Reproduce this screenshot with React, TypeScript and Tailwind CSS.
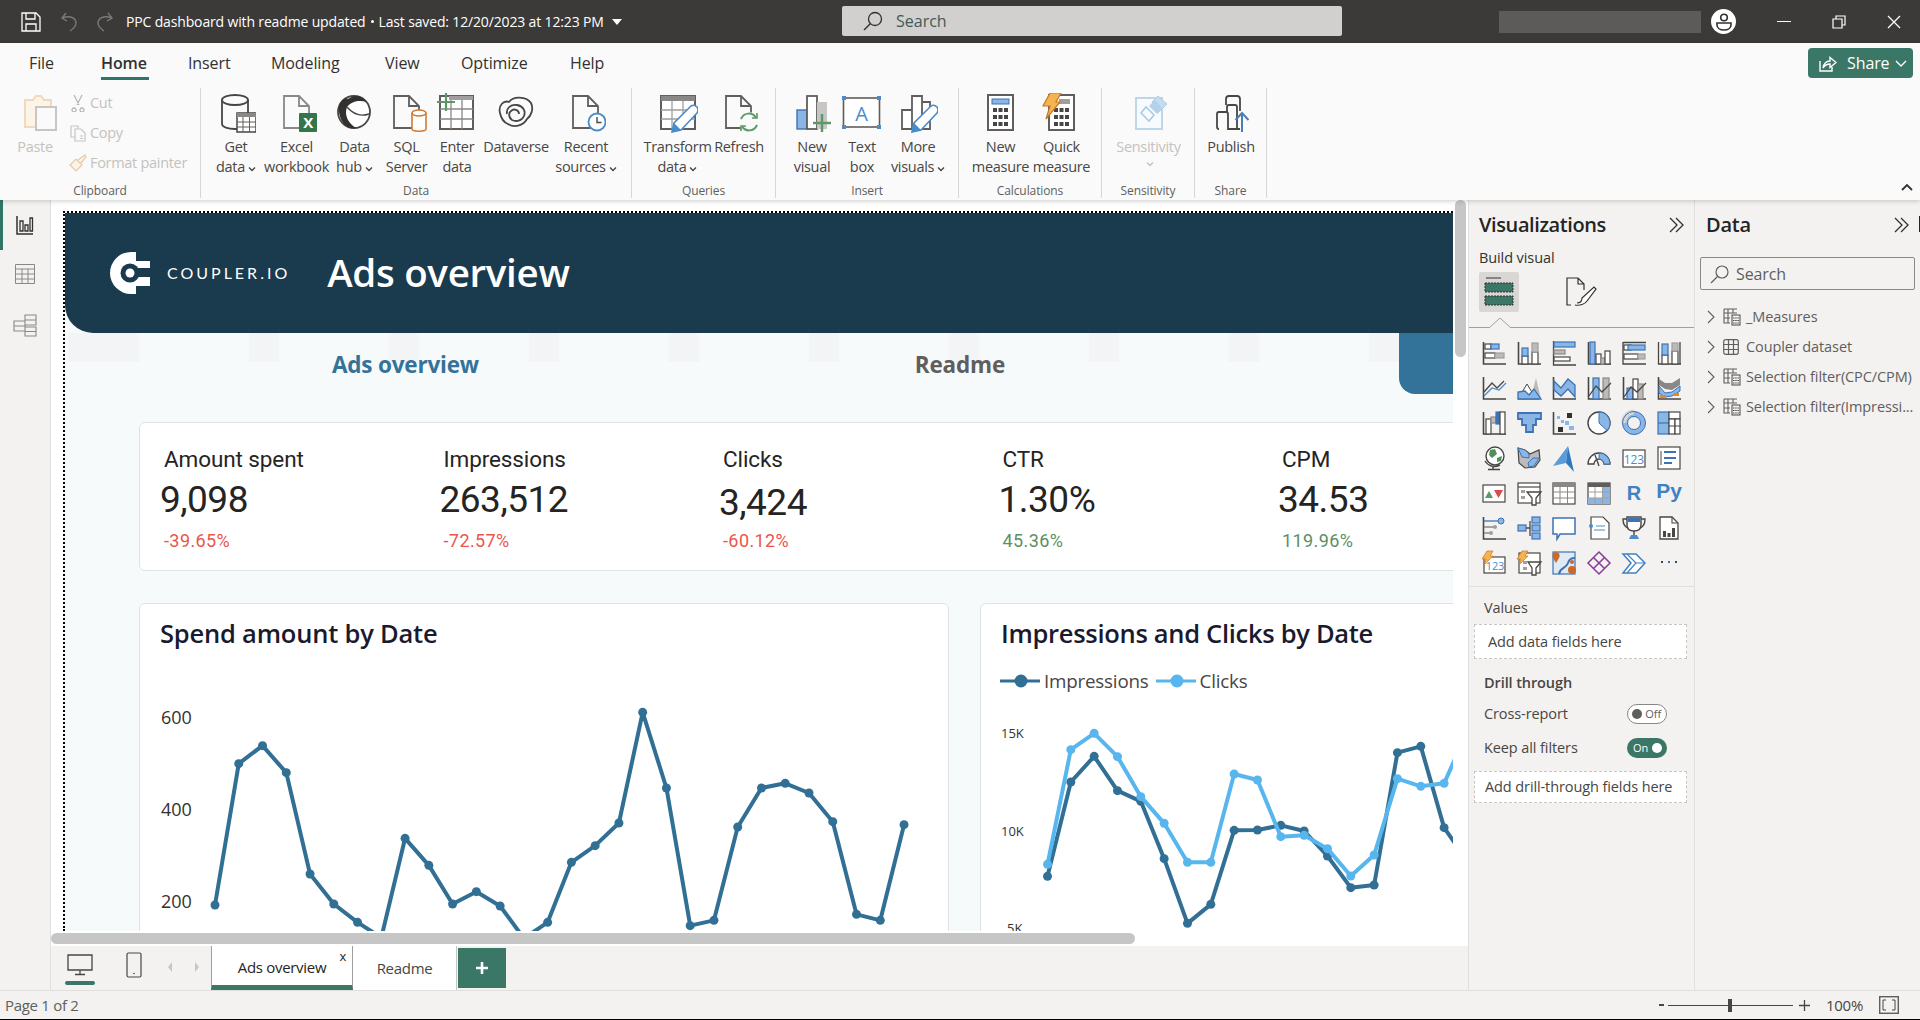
import type { ReactNode } from "react"

// ─── Colours ───────────────────────────────────────────────────────────────

const D = "#484644"
const B = "#8ab6e6"
const BS = "#3d72b4"
const G = "#bdbbb9"
const W = "#ffffff"

// ─── Small drawing helpers ─────────────────────────────────────────────────

function R({ x, y, w, h, f = W, s = D }: { x: number; y: number; w: number; h: number; f?: string; s?: string }) {
  return <rect x={x} y={y} width={w} height={h} fill={f} stroke={s} strokeWidth="1.2" />
}

function Axes() {
  return <path d="M1.5 1V23H24" fill="none" stroke={D} strokeWidth="1.6" />
}

function Doc({ c = "#605e5c" }: { c?: string }) {
  return <path d="M7 3H22L32 13V35H7ZM22 3V13H32" fill="#fafafa" stroke={c} strokeWidth="1.8" />
}

function Pencil() {
  return (
    <g>
      <path d="M14 39L16 30L33 13Q36 11 39 14Q41 17 39 20L23 37Z" fill="#fff" stroke="#4a8ccb" strokeWidth="1.6" />
      <path d="M14 39L16 30L23 37Z" fill="#4a8ccb" />
    </g>
  )
}

function Calc() {
  return (
    <>
      <rect x="7" y="2" width="25" height="35" fill="#fff" stroke="#605e5c" strokeWidth="2" />
      {[12, 17.5, 23].map((x) =>
        [15, 22, 29].map((y) => <rect key={`${x}-${y}`} x={x} y={y} width="4" height="4" fill="#484644" />),
      )}
    </>
  )
}

function Rib({ children }: { children: ReactNode }) {
  return (
    <svg viewBox="0 0 40 40" className="w-[40px] h-[40px] shrink-0">
      {children}
    </svg>
  )
}

// ─── Ribbon icons ──────────────────────────────────────────────────────────

const GetDataIcon = (
  <Rib>
    <path d="M6 7V31C6 34 12 36 19 36C26 36 32 34 32 31V7" fill="#fafafa" stroke="#484644" strokeWidth="1.8" />
    <ellipse cx="19" cy="7" rx="13" ry="5" fill="#fafafa" stroke="#484644" strokeWidth="1.8" />
    <rect x="21" y="20" width="19" height="19" fill="#fff" stroke="#484644" strokeWidth="1.5" />
    <rect x="21" y="20" width="19" height="4" fill="#8a8886" />
    <path d="M27 24V39M33.5 24V39M21 29H40M21 34H40" stroke="#605e5c" strokeWidth="1" />
  </Rib>
)
const ExcelIcon = (
  <Rib>
    <Doc c="#8a8886" />
    <rect x="22" y="20" width="18" height="19" rx="1" fill="#33764b" />
    <text x="31" y="35" textAnchor="middle" fontSize="15" fontWeight="700" fill="#fff">X</text>
  </Rib>
)
const HubIcon = (
  <Rib>
    <circle cx="19" cy="19" r="16" fill="#fff" stroke="#484644" strokeWidth="1.8" />
    <path d="M4 19C3 10 8 4 13 6C20 1 27 2 32 9C24 7 17 8 12 14C9 22 13 30 21 35C12 37 5 29 4 19Z" fill="#323130" />
    <path d="M12 14C18 21 25 24 34 21" fill="none" stroke="#484644" strokeWidth="1.4" />
  </Rib>
)
const SqlIcon = (
  <Rib>
    <Doc c="#605e5c" />
    <path d="M25 20V36C25 39 39 39 39 36V20" fill="#fff" stroke="#d07a33" strokeWidth="1.6" />
    <ellipse cx="32" cy="20" rx="7" ry="3" fill="#fff" stroke="#d07a33" strokeWidth="1.6" />
  </Rib>
)
const EnterIcon = (
  <Rib>
    <rect x="3" y="3" width="33" height="33" fill="#fff" stroke="#605e5c" strokeWidth="2" />
    <rect x="12" y="3" width="24" height="4" fill="#a19f9d" />
    <path d="M14 7V36M25 7V36M3 16H36M3 26H36" stroke="#8a8886" strokeWidth="1.3" />
    <path d="M9 0V18M0 9H18" stroke="#5b9a68" strokeWidth="2.2" />
  </Rib>
)
const DataverseIcon = (
  <Rib>
    <path d="M4 20C2 12 8 7 13 9C17 3 30 3 35 10C38 16 35 23 31 26C27 33 18 35 12 31C7 29 5 25 4 20Z" fill="none" stroke="#484644" strokeWidth="1.8" />
    <path d="M11 21C10 15 15 11 21 12C27 13 30 18 28 23C26 28 20 29 16 27C13 25 12 20 15 18C18 15 23 17 23 21" fill="none" stroke="#484644" strokeWidth="1.8" />
  </Rib>
)
const RecentIcon = (
  <Rib>
    <Doc />
    <circle cx="31" cy="29" r="8.5" fill="#fff" stroke="#4a8ccb" strokeWidth="1.8" />
    <path d="M31 24V29.5H35.5" fill="none" stroke="#484644" strokeWidth="1.4" />
  </Rib>
)
const TransformIcon = (
  <Rib>
    <rect x="3" y="3" width="34" height="33" fill="#fff" stroke="#605e5c" strokeWidth="2" />
    <rect x="3" y="3" width="34" height="5" fill="#8a8886" />
    <path d="M14 8V36M25 8V36M3 17H37M3 26H37" stroke="#a19f9d" strokeWidth="1.3" />
    <Pencil />
  </Rib>
)
const RefreshIcon = (
  <Rib>
    <Doc />
    <circle cx="30" cy="29" r="10" fill="#fafafa" />
    <path d="M22 26C25 19 34 19 37 25M38 32C35 39 26 39 23 33" fill="none" stroke="#5b9a68" strokeWidth="2" />
    <path d="M33 25H38V20M27 33H22V38" fill="none" stroke="#5b9a68" strokeWidth="1.6" />
  </Rib>
)
const NewVisualIcon = (
  <Rib>
    <rect x="5" y="17" width="10" height="19" fill={B} stroke={BS} strokeWidth="1.4" />
    <rect x="15" y="3" width="10" height="33" fill="#fff" stroke="#605e5c" strokeWidth="1.8" />
    <rect x="25" y="9" width="10" height="27" fill="#c8c6c4" />
    <path d="M30 21V39M21 30H39" stroke="#5b9a68" strokeWidth="2.4" />
  </Rib>
)
const TextBoxIcon = (
  <Rib>
    <rect x="1.5" y="5" width="36" height="29" fill="#fff" stroke="#605e5c" strokeWidth="1.6" />
    {[[0, 3], [35, 3], [0, 32], [35, 32]].map(([x, y]) => (
      <rect key={`${x}-${y}`} x={x} y={y} width="4" height="4" fill="#4a8ccb" />
    ))}
    <text x="19.5" y="28" textAnchor="middle" fontSize="20" fill="#4a8ccb">A</text>
  </Rib>
)
const MoreVisualsIcon = (
  <Rib>
    <path d="M4 17H14V36H4ZM14 3H24V36H14ZM24 9H32V36H24Z" fill="#fff" stroke="#605e5c" strokeWidth="1.8" />
    <Pencil />
  </Rib>
)
const NewMeasureIcon = (
  <Rib>
    <Calc />
    <rect x="11" y="6" width="17" height="5" fill={B} stroke={BS} strokeWidth="1" />
  </Rib>
)
const QuickMeasureIcon = (
  <Rib>
    <Calc />
    <rect x="17" y="6" width="11" height="5" fill="#a19f9d" />
    <path d="M8 0H19L14 9H18L4 26L8 13H1Z" fill="#f6b352" stroke="#c7782a" strokeWidth="1.2" />
  </Rib>
)
const SensitivityIcon = (
  <Rib>
    <rect x="7" y="5" width="26" height="31" fill="#f8fbfd" stroke="#bcd6ea" strokeWidth="2" />
    <path d="M12 20L20 28L25 22L17 14Z" fill="none" stroke="#a9cbe4" strokeWidth="1.6" />
    <path d="M23 9L29 3L38 11L32 17Z" fill="#c4dcee" stroke="#a9cbe4" strokeWidth="1" />
    <path d="M20 13L26 7L34 16L28 21Z" fill="#b3d2e9" />
  </Rib>
)
const PublishIcon = (
  <Rib>
    <path d="M15 12V6Q15 3 18 3H26Q29 3 29 6V18" fill="none" stroke="#484644" strokeWidth="1.8" />
    <path d="M16 19V14Q16 12 18 12H24Q26 12 26 14V36" fill="none" stroke="#484644" strokeWidth="1.8" />
    <path d="M8 36Q6 36 6 34V21Q6 19 8 19H15Q17 19 17 21V36H29" fill="none" stroke="#484644" strokeWidth="1.8" />
    <path d="M31 20V39M24.5 27L31 20L37.5 27" fill="none" stroke="#4a7fb5" strokeWidth="2" />
  </Rib>
)

// ─── Ribbon ────────────────────────────────────────────────────────────────

type RibbonBtn = { w: string; l1: string; l2?: string; caret?: boolean; icon: ReactNode; muted?: boolean }

function RibbonButton({ b }: { b: RibbonBtn }) {
  return (
    <div className={`${b.w} shrink-0 flex flex-col items-center whitespace-nowrap leading-[20px] ${b.muted ? "text-[#c4c2c0]" : "text-[#484644]"}`}>
      {b.icon}
      <span className="mt-[4px]">{b.l1}</span>
      {b.l2 && (
        <span className="flex items-center">
          {b.l2}
          {b.caret && <Caret />}
        </span>
      )}
      {!b.l2 && b.caret && <Caret />}
    </div>
  )
}

function Caret() {
  return (
    <svg viewBox="0 0 8 8" className="w-[8px] h-[8px] ml-[3px] mt-[3px]">
      <path d="M1 2.5L4 5.5L7 2.5" fill="none" stroke="currentColor" strokeWidth="1.4" />
    </svg>
  )
}

function Group({ label, w, pad, children }: { label: string; w: string; pad: string; children: ReactNode }) {
  return (
    <div className={`${w} h-full shrink-0 flex flex-col border-r border-[#d8d6d4]`}>
      <div className={`${pad} flex-1 flex pt-[5px]`}>{children}</div>
      <div className="h-[14px] text-center text-[12px] leading-[14px] text-[#605e5c] tracking-[-0.1px]">{label}</div>
    </div>
  )
}

function ClipIcon({ d }: { d: ReactNode }) {
  return (
    <svg viewBox="0 0 18 18" className="w-[18px] h-[18px] mr-[3px]">
      {d}
    </svg>
  )
}

function Ribbon() {
  return (
    <div className="relative z-10 h-[157px] bg-[#fafafa] shadow-[0_1px_5px_rgba(0,0,0,0.2)] shrink-0">
      <div className="h-[40px] flex items-center pl-[29px] text-[16px] text-[#323130] tracking-[-0.1px]">
        <span className="w-[72px]">File</span>
        <span className="w-[87px] relative font-semibold">
          Home
          <span className="absolute left-0 top-[26px] w-[48px] h-[3px] bg-[#2f7566]" />
        </span>
        <span className="w-[83px]">Insert</span>
        <span className="w-[114px]">Modeling</span>
        <span className="w-[76px]">View</span>
        <span className="w-[109px]">Optimize</span>
        <span>Help</span>
        <div className="ml-auto mr-[7px] w-[105px] h-[30px] rounded-[4px] bg-[#3a7766] text-white flex items-center pl-[9px]">
          <svg viewBox="0 0 20 20" className="w-[20px] h-[20px] mr-[10px]">
            <path d="M3 8V18H15V14" fill="none" stroke="#fff" strokeWidth="1.4" />
            <path d="M6 15C7 10 10 8 13 8V4.5L19 9.5L13 14.5V11C10 11 8 12 6 15Z" fill="none" stroke="#fff" strokeWidth="1.4" />
          </svg>
          Share
          <svg viewBox="0 0 12 12" className="w-[12px] h-[12px] ml-[5px]">
            <path d="M1 4L6 9L11 4" fill="none" stroke="#fff" strokeWidth="1.4" />
          </svg>
        </div>
      </div>
      <div className="h-[110px] mt-[5px] flex text-[14.5px] tracking-[-0.3px]">
        <Group label="Clipboard" w="w-[201px]" pad="pl-[15px]">
          <div className="w-full flex text-[#c4c2c0]">
            <div className="w-[54px] flex flex-col items-center leading-[20px]">
              <svg viewBox="0 0 40 40" className="w-[40px] h-[40px]">
                <path d="M3 7H11L14 3H19L22 7H29V34H3Z" fill="#fdf4e8" stroke="#f0d9bd" strokeWidth="2" />
                <rect x="14" y="14" width="20" height="23" fill="#fafafa" stroke="#c8c6c4" strokeWidth="2" />
              </svg>
              <span className="mt-[4px] -ml-[14px]">Paste</span>
            </div>
            <div className="flex flex-col -mt-[5px]">
              <div className="h-[30px] flex items-center">
                <ClipIcon d={<path d="M5 1L10 11M13 1L8 11M5 14a2 2 0 1 0 .01 0M13 14a2 2 0 1 0 .01 0" fill="none" stroke="#b9b7b5" strokeWidth="1.3" />} />
                Cut
              </div>
              <div className="h-[30px] flex items-center">
                <ClipIcon d={<path d="M2 2H9V5M6 5H12L16 9V17H6ZM2 2V13H6M11 12H14M11 14.5H14" fill="none" stroke="#c8c6c4" strokeWidth="1.2" />} />
                Copy
              </div>
              <div className="h-[30px] flex items-center">
                <ClipIcon d={<path d="M1 11L7 5L13 11L7 17ZM9 6L16 1L17 3L12 9" fill="#fdf4e8" stroke="#e6c9a8" strokeWidth="1.2" />} />
                Format painter
              </div>
            </div>
          </div>
        </Group>
        <Group label="Data" w="w-[431px]" pad="pl-[5px]">
          {[
            { w: "w-[60px]", l1: "Get", l2: "data", caret: true, icon: GetDataIcon },
            { w: "w-[61px]", l1: "Excel", l2: "workbook", icon: ExcelIcon },
            { w: "w-[55px]", l1: "Data", l2: "hub", caret: true, icon: HubIcon },
            { w: "w-[49px]", l1: "SQL", l2: "Server", icon: SqlIcon },
            { w: "w-[52px]", l1: "Enter", l2: "data", icon: EnterIcon },
            { w: "w-[66px]", l1: "Dataverse", icon: DataverseIcon },
            { w: "w-[74px]", l1: "Recent", l2: "sources", caret: true, icon: RecentIcon },
          ].map((b) => (
            <RibbonButton key={b.l1} b={b} />
          ))}
        </Group>
        <Group label="Queries" w="w-[144px]" pad="pl-[8px]">
          <RibbonButton b={{ w: "w-[75px]", l1: "Transform", l2: "data", caret: true, icon: TransformIcon }} />
          <RibbonButton b={{ w: "w-[48px]", l1: "Refresh", icon: RefreshIcon }} />
        </Group>
        <Group label="Insert" w="w-[183px]" pad="pl-[11px]">
          <RibbonButton b={{ w: "w-[50px]", l1: "New", l2: "visual", icon: NewVisualIcon }} />
          <RibbonButton b={{ w: "w-[50px]", l1: "Text", l2: "box", icon: TextBoxIcon }} />
          <RibbonButton b={{ w: "w-[62px]", l1: "More", l2: "visuals", caret: true, icon: MoreVisualsIcon }} />
        </Group>
        <Group label="Calculations" w="w-[143px]" pad="pl-[11px]">
          <RibbonButton b={{ w: "w-[61px]", l1: "New", l2: "measure", icon: NewMeasureIcon }} />
          <RibbonButton b={{ w: "w-[61px]", l1: "Quick", l2: "measure", icon: QuickMeasureIcon }} />
        </Group>
        <Group label="Sensitivity" w="w-[93px]" pad="pl-[9px]">
          <RibbonButton b={{ w: "w-[75px]", l1: "Sensitivity", caret: true, icon: SensitivityIcon, muted: true }} />
        </Group>
        <Group label="Share" w="w-[72px]" pad="pl-[6px]">
          <RibbonButton b={{ w: "w-[60px]", l1: "Publish", icon: PublishIcon }} />
        </Group>
        <div className="ml-auto self-end mr-[7px] mb-[7px]">
          <svg viewBox="0 0 12 8" className="w-[12px] h-[8px]">
            <path d="M1 7L6 2L11 7" fill="none" stroke="#323130" strokeWidth="1.8" />
          </svg>
        </div>
      </div>
    </div>
  )
}

// ─── Title bar ─────────────────────────────────────────────────────────────

function TitleBar() {
  return (
    <div className="h-[43px] shrink-0 bg-[#3b3a39] flex items-center text-white relative">
      <svg viewBox="0 0 20 20" className="ml-[21px] w-[20px] h-[20px]">
        <path d="M2 1H15L19 5V19H1V1ZM5 1V7H14V1M5 19V12H15V19" fill="none" stroke="#fff" strokeWidth="1.3" />
      </svg>
      <svg viewBox="0 0 18 20" className="ml-[19px] w-[18px] h-[20px]">
        <path d="M6 1L2 6L7 9M2 6C10 3 16 6 16 11C16 15 13 17 10 19" fill="none" stroke="#7a7977" strokeWidth="1.4" />
      </svg>
      <svg viewBox="0 0 18 20" className="ml-[18px] w-[18px] h-[20px]">
        <path d="M12 1L16 6L11 9M16 6C8 3 2 6 2 11C2 15 5 17 8 19" fill="none" stroke="#7a7977" strokeWidth="1.4" />
      </svg>
      <span className="ml-[12px] text-[14px] tracking-[-0.15px] whitespace-nowrap">PPC dashboard with readme updated</span>
      <span className="mx-[5px] w-[3px] h-[3px] bg-white rounded-full" />
      <span className="text-[14px] tracking-[-0.15px] whitespace-nowrap">Last saved: 12/20/2023 at 12:23 PM</span>
      <svg viewBox="0 0 10 6" className="ml-[8px] w-[10px] h-[6px]">
        <path d="M0 0H10L5 6Z" fill="#fff" />
      </svg>
      <div className="absolute left-[842px] top-[6px] w-[500px] h-[30px] rounded-[2px] bg-[#d2d0ce] flex items-center pl-[21px] text-[#3f5a58] text-[16px]">
        <svg viewBox="0 0 20 20" className="w-[20px] h-[20px] mr-[13px]">
          <circle cx="12" cy="8" r="6.5" fill="none" stroke="#323130" strokeWidth="1.3" />
          <path d="M7.5 12.5L1 19" stroke="#323130" strokeWidth="1.5" />
        </svg>
        Search
      </div>
      <div className="ml-auto w-[202px] h-[22px] bg-[#5c5b5a]" />
      <div className="ml-[10px] w-[25px] h-[25px] rounded-full bg-white flex items-center justify-center">
        <svg viewBox="0 0 20 20" className="w-[20px] h-[20px]">
          <circle cx="10" cy="5.5" r="3.3" fill="none" stroke="#323130" strokeWidth="1.6" />
          <path d="M3 11H17V13C17 16 14 18 10 18C6 18 3 16 3 13Z" fill="none" stroke="#323130" strokeWidth="1.6" />
        </svg>
      </div>
      <div className="ml-[41px] w-[14px] h-px bg-white" />
      <svg viewBox="0 0 14 14" className="ml-[41px] w-[14px] h-[14px]">
        <path d="M1 4H10V13H1ZM4 4V1H13V10H10" fill="none" stroke="#fff" strokeWidth="1.2" />
      </svg>
      <svg viewBox="0 0 14 14" className="ml-[41px] mr-[19px] w-[14px] h-[14px]">
        <path d="M1 1L13 13M13 1L1 13" stroke="#fff" strokeWidth="1.3" />
      </svg>
    </div>
  )
}

// ─── Left nav ──────────────────────────────────────────────────────────────

function LeftNav() {
  return (
    <div className="w-[51px] shrink-0 bg-[#f3f2f1] border-r border-[#e1dfdd] flex flex-col items-center">
      <div className="relative w-full h-[50px] flex items-center justify-center">
        <span className="absolute left-0 top-0 w-[3px] h-[50px] bg-[#2f7566]" />
        <svg viewBox="0 0 18 20" className="w-[18px] h-[20px]">
          <path d="M1 1V19H17" fill="none" stroke="#323130" strokeWidth="1.5" />
          <path d="M4 6H7V16H4ZM9 10H12V16H9ZM14 3H16.5V16H14Z" fill="none" stroke="#323130" strokeWidth="1.3" />
        </svg>
      </div>
      <svg viewBox="0 0 20 20" className="w-[20px] h-[20px] mt-[14px]">
        <path d="M.5 .5H19.5V19.5H.5ZM.5 5H19.5M.5 10H19.5M.5 15H19.5M7 5V19.5M13 5V19.5" fill="none" stroke="#8a8886" strokeWidth="1" />
      </svg>
      <svg viewBox="0 0 24 24" className="w-[24px] h-[24px] mt-[29px]">
        <path d="M12 2H23V12H12ZM12 7H23M1 8H12V18H1ZM1 13H12M12 14H23V23H12ZM12 18.5H23" fill="none" stroke="#8a8886" strokeWidth="1.1" />
      </svg>
    </div>
  )
}

// ─── Report canvas ─────────────────────────────────────────────────────────

const spendPts = [942, 518, 464, 545, 849, 939, 994, 1040, 742, 823, 939, 902, 945, 1042, 994, 814, 764, 696, 364, 591, 1004, 988, 708, 591, 577, 606, 692, 970, 988, 701]
const impressionPts = [856, 573, 496, 599, 631, 803, 997, 940, 718, 717, 703, 720, 795, 890, 882, 485, 466, 710, 811]
const clickPts = [820, 476, 427, 497, 617, 697, 814, 814, 549, 567, 737, 733, 773, 855, 792, 563, 586, 577, 420]

function Series({ pts, x0, dx, y0, color }: { pts: number[]; x0: number; dx: number; y0: number; color: string }) {
  const xy = pts.map((p, i) => [x0 + i * dx, y0 + p / 3])
  return (
    <>
      <polyline points={xy.map((p) => p.join(",")).join(" ")} fill="none" stroke={color} strokeWidth="4" strokeLinejoin="round" />
      {xy.map((p, i) => (
        <circle key={i} cx={p[0]} cy={p[1]} r="4.5" fill={color} />
      ))}
    </>
  )
}

const kpis = [
  { label: "Amount spent", value: "9,098", pct: "-39.65%", good: false },
  { label: "Impressions", value: "263,512", pct: "-72.57%", good: false },
  { label: "Clicks", value: "3,424", pct: "-60.12%", good: false },
  { label: "CTR", value: "1.30%", pct: "45.36%", good: true },
  { label: "CPM", value: "34.53", pct: "119.96%", good: true },
]

function Coupler() {
  return (
    <svg viewBox="0 0 42 42" className="w-[42px] h-[42px]">
      <path d="M27 0H22A21 21 0 0 0 22 42H27V34H41V25H27V16H41V9H27Z" fill="#fff" />
      <circle cx="21" cy="21" r="9.5" fill="#1a3a4e" />
      <circle cx="21" cy="21" r="4.5" fill="#fff" />
    </svg>
  )
}

function Page() {
  return (
    <div className="w-[1390px] h-full overflow-hidden border-l-2 border-t-2 border-dotted border-black bg-[#f7fafb]">
      <div className="h-[120px] rounded-bl-[28px] bg-[#1a3a4e] flex items-center pl-[44px] text-white">
        <Coupler />
        <span className="ml-[16px] text-[16px] tracking-[3px] font-['Lato',sans-serif]">COUPLER.IO</span>
        <span className="ml-[37px] text-[38.5px] font-semibold tracking-[-0.3px]">Ads overview</span>
      </div>
      <div className="relative h-[89px] flex text-[22.5px] font-bold tracking-[-0.2px]">
        <div className="absolute left-[3px] top-0 h-[29px] flex gap-[110px]">
          <div className="w-[71px] bg-[#f3f4f5]" />
          {[0, 1, 2, 3, 4, 5, 6, 7, 8].map((i) => (
            <div key={i} className="w-[30px] bg-[#f3f4f5]" />
          ))}
        </div>
        <span className="relative ml-[267px] mt-[15px] h-[30px] text-[#34729a]">Ads overview</span>
        <span className="relative ml-[436px] mt-[15px] h-[30px] text-[#605e5c]">Readme</span>
        <div className="relative ml-auto w-[54px] h-[61px] rounded-bl-[16px] bg-[#337299]" />
      </div>
      <div className="ml-[74px] w-[1500px] h-[149px] rounded-[6px] bg-white border border-[#dfe3e5] flex pt-[20px] pl-[20px] font-['Roboto',sans-serif]">
        {kpis.map((k) => (
          <div key={k.label} className="w-[279.5px] shrink-0 flex flex-col">
            <span className="ml-[4px] h-[32px] leading-[32px] text-[22.5px] tracking-[-0.1px] text-[#252423]">{k.label}</span>
            <span className={`h-[44px] leading-[44px] text-[37px] tracking-[-0.5px] text-[#252423] ${k.label === "Clicks" ? "mt-[6px] -mb-[3px]" : "mt-[3px]"}`}>{k.value}</span>
            <span className={`ml-[4px] mt-[8px] h-[22px] leading-[22px] text-[18px] tracking-[0.4px] ${k.good ? "text-[#5d8f5f]" : "text-[#e8574a]"}`}>{k.pct}</span>
          </div>
        ))}
      </div>
      <div className="ml-[74px] mt-[32px] w-[1700px] flex gap-[31px]">
        <div className="w-[810px] h-[500px] shrink-0 rounded-[6px] bg-white border border-[#dfe3e5]">
          <div className="h-[60px] pl-[20px] pt-[10px] text-[25.5px] font-semibold tracking-[-0.2px] text-[#1a1a2e]">Spend amount by Date</div>
          <svg className="block w-full h-[430px]">
            <text x="21" y="60" fontSize="18" fill="#323130">600</text>
            <text x="21" y="152" fontSize="18" fill="#323130">400</text>
            <text x="21" y="244" fontSize="18" fill="#323130">200</text>
            <Series pts={spendPts} x0={75} dx={23.76} y0={-73} color="#326f94" />
          </svg>
        </div>
        <div className="w-[810px] h-[500px] shrink-0 rounded-[6px] bg-white border border-[#dfe3e5]">
          <div className="h-[60px] pl-[20px] pt-[10px] text-[25.5px] font-semibold tracking-[-0.3px] text-[#1a1a2e]">Impressions and Clicks by Date</div>
          <div className="h-[34px] pl-[19px] flex items-center text-[18.8px] tracking-[-0.2px] text-[#484644]">
            <svg viewBox="0 0 40 14" className="w-[40px] h-[14px] mr-[4px]">
              <path d="M0 7H40" stroke="#326f94" strokeWidth="3" />
              <circle cx="21" cy="7" r="6.5" fill="#326f94" />
            </svg>
            Impressions
            <svg viewBox="0 0 40 14" className="w-[40px] h-[14px] ml-[7px] mr-[4px]">
              <path d="M0 7H40" stroke="#57b6ee" strokeWidth="3" />
              <circle cx="21" cy="7" r="6.5" fill="#57b6ee" />
            </svg>
            Clicks
          </div>
          <svg className="block w-full h-[400px]">
            <text x="20" y="40" fontSize="13" fill="#323130">15K</text>
            <text x="20" y="138" fontSize="13" fill="#323130">10K</text>
            <text x="26" y="235" fontSize="13" fill="#323130">5K</text>
            <Series pts={impressionPts} x0={66.5} dx={23.33} y0={-107} color="#326f94" />
            <Series pts={clickPts} x0={66.5} dx={23.33} y0={-107} color="#57b6ee" />
          </svg>
        </div>
      </div>
    </div>
  )
}

function PageTabs() {
  return (
    <div className="h-[44px] shrink-0 bg-[#f3f2f1] flex text-[15px] tracking-[-0.3px]">
      <div className="w-[43px] ml-[7px] flex flex-col items-center pt-[8px]">
        <svg viewBox="0 0 26 22" className="w-[26px] h-[22px]">
          <path d="M1 1H25V16H1ZM13 16V20M8 20.5H18" fill="none" stroke="#484644" strokeWidth="1.3" />
        </svg>
        <span className="w-[30px] h-[4px] mt-[5px] rounded-[2px] bg-[#3a7766]" />
      </div>
      <svg viewBox="0 0 16 26" className="ml-[25px] mt-[6px] w-[16px] h-[26px]">
        <rect x="1" y="1" width="14" height="24" rx="1.5" fill="none" stroke="#484644" strokeWidth="1.2" />
        <circle cx="8" cy="21.5" r=".8" fill="#484644" />
      </svg>
      <svg viewBox="0 0 8 12" className="ml-[24px] mt-[15px] w-[8px] h-[12px]">
        <path d="M6 1L2 6L6 11Z" fill="#c8c6c4" />
      </svg>
      <svg viewBox="0 0 8 12" className="ml-[19px] mt-[15px] w-[8px] h-[12px]">
        <path d="M2 1L6 6L2 11Z" fill="#c8c6c4" />
      </svg>
      <div className="relative ml-[10px] w-[142px] pt-[3px] bg-white border-l border-r border-[#a19f9d] flex items-center justify-center text-[#252423] border-b-[5px] border-b-[#3a7766]">
        Ads overview
        <span className="absolute right-[6px] top-[2px] text-[13px] leading-[16px]">x</span>
      </div>
      <div className="w-[104px] bg-white border-r border-[#c8c6c4] flex items-center justify-center text-[#484644]">Readme</div>
      <div className="ml-px w-[48px] h-[40px] mt-[2px] bg-[#3a7766] flex items-center justify-center">
        <svg viewBox="0 0 14 14" className="w-[14px] h-[14px]">
          <path d="M7 1V13M1 7H13" stroke="#fff" strokeWidth="2.6" />
        </svg>
      </div>
    </div>
  )
}

function Canvas() {
  return (
    <div className="w-[1417px] shrink-0 flex flex-col min-h-0 bg-white">
      <div className="flex-1 min-h-0 flex">
        <div className="pl-[12px] pt-[11px] h-[731px] overflow-hidden">
          <Page />
        </div>
        <div className="pl-[2px]">
          <div className="w-[11px] h-[157px] rounded-full bg-[#c6c6c6]" />
        </div>
      </div>
      <div className="h-[15px] shrink-0 pt-[2px]">
        <div className="w-[1084px] h-[11px] rounded-full bg-[#c6c6c6]" />
      </div>
      <PageTabs />
    </div>
  )
}

// ─── Visualizations icons ──────────────────────────────────────────────────

const vizIcons: ReactNode[] = [
  <><Axes /><R x={3} y={3} w={6} h={5} /><R x={9} y={3} w={8} h={5} f={B} s={BS} /><R x={3} y={12} w={10} h={5} /><R x={13} y={12} w={9} h={5} f={G} s="#a19f9d" /></>,
  <><Axes /><R x={5} y={15} w={6} h={8} /><R x={5} y={7} w={6} h={8} f={B} s={BS} /><R x={15} y={11} w={6} h={12} /><R x={15} y={2} w={6} h={9} f={G} s="#a19f9d" /></>,
  <><path d="M1.5 0V24H24" fill="none" stroke={D} strokeWidth="1.3" /><R x={2} y={1} w={21} h={5} f={B} s={BS} /><R x={2} y={9} w={11} h={4} f={G} s="#8a8886" /><R x={2} y={16} w={16} h={4} /></>,
  <><Axes /><R x={3} y={1} w={5} h={22} f={B} s={BS} /><R x={9} y={13} w={5} h={10} /><R x={14} y={17} w={4} h={6} f={G} s="#8a8886" /><R x={18} y={10} w={5} h={13} /></>,
  <><path d="M1 1.5H24M1 1V23H24" fill="none" stroke={D} strokeWidth="1.3" /><R x={2} y={4} w={7} h={5} /><R x={6} y={4} w={17} h={5} f={B} s={BS} /><R x={2} y={13} w={14} h={5} /><R x={16} y={13} w={7} h={5} f={G} s="#a19f9d" /></>,
  <><path d="M1.5 1V23H24M23 1V23" fill="none" stroke={D} strokeWidth="1.3" /><R x={5} y={14} w={6} h={9} /><R x={5} y={3} w={6} h={11} f={B} s={BS} /><R x={15} y={10} w={6} h={13} /><R x={15} y={2} w={6} h={8} f={G} s="#a19f9d" /></>,

  <><Axes /><path d="M2 16L10 7L15 12L22 5" fill="none" stroke={D} strokeWidth="1.3" /><path d="M2 20L10 12L17 14L24 7" fill="none" stroke="#4a8ccb" strokeWidth="1.3" /></>,
  <><path d="M1 23L9 9L15 18L19 2L24 23Z" fill={G} /><path d="M1 23L10 8L16 18L22 23Z" fill={W} stroke={D} strokeWidth="1" /><path d="M1 23V16L8 15L12 19L17 13L24 23Z" fill={B} stroke={BS} strokeWidth="1.3" /></>,
  <><Axes /><path d="M2 5L9 12L16 3L23 9V21L16 13L9 20L2 14Z" fill={B} stroke={BS} strokeWidth="1.3" /></>,
  <><Axes /><R x={6} y={2} w={6} h={21} f={B} s={BS} /><R x={16} y={2} w={6} h={21} f={G} s="#8a8886" /><path d="M2 20L9 10L15 16L24 7" fill="none" stroke={D} strokeWidth="1.3" /></>,
  <><Axes /><R x={5} y={12} w={6} h={11} f={B} s={BS} /><R x={11} y={3} w={5} h={20} /><R x={16} y={8} w={5} h={15} f={G} s="#8a8886" /><path d="M2 21L9 11L15 16L24 7" fill="none" stroke={D} strokeWidth="1.3" /></>,
  <><Axes /><path d="M2 3L8 7L15 7L23 2V9L15 14L8 13L2 9Z" fill="#8a8886" /><path d="M2 10L8 17L15 16L23 10V15L15 20L8 21L2 17Z" fill={B} stroke={BS} strokeWidth="1" /><path d="M3 19H9V22H3ZM16 17H22V20H16Z" fill="#e08a2e" /></>,

  <><Axes /><R x={4} y={8} w={5} h={15} /><R x={9} y={6} w={5} h={6} f={G} s="#8a8886" /><R x={14} y={1} w={4} h={12} f={BS} s={BS} /><R x={18} y={1} w={5} h={22} /></>,
  <><path d="M1 2H24V8H19V14H16V21H9V14H5V8H1Z" fill={B} stroke={BS} strokeWidth="1.8" /></>,
  <><Axes /><rect x="5" y="5" width="3" height="3" fill={B} /><rect x="9" y="9" width="3" height="3" fill={B} /><rect x="15" y="2" width="5" height="5" fill="#323130" /><rect x="13" y="10" width="4" height="4" fill={B} /><rect x="6" y="16" width="5" height="5" fill="#323130" /><rect x="17" y="15" width="5" height="4" fill={B} /></>,
  <><circle cx="12" cy="12" r="11" fill="#fff" stroke={D} strokeWidth="1.4" /><path d="M12 1A11 11 0 0 1 20 19.5L12 12Z" fill={B} stroke={BS} strokeWidth="1" /></>,
  <><circle cx="12" cy="12" r="9" fill="none" stroke={B} strokeWidth="5" /><path d="M2 12A10 10 0 0 1 12 1" fill="none" stroke="#d8d6d4" strokeWidth="5" /><circle cx="12" cy="12" r="6.5" fill="none" stroke={BS} strokeWidth="1" /><circle cx="12" cy="12" r="11.5" fill="none" stroke={BS} strokeWidth="1" /></>,
  <><R x={1} y={1} w={11} h={22} f={B} s={BS} /><path d="M1 12H12" stroke={BS} strokeWidth="1.2" /><R x={12} y={1} w={11} h={7} /><R x={12} y={8} w={6} h={15} /><R x={18} y={8} w={5} h={15} /><path d="M12 15H24" stroke={D} strokeWidth="1" /></>,

  <><circle cx="13" cy="10" r="9" fill="#fff" stroke={D} strokeWidth="1.4" /><path d="M8 4L13 3L15 8L10 12L7 9ZM15 12L20 10L19 15L15 16Z" fill="#4f8f58" /><path d="M3 15C6 20 12 22 18 19M11 20V23M6 23.5H18" fill="none" stroke={D} strokeWidth="1.4" /></>,
  <><path d="M1 2L8 4L13 8L22 4L23 14L18 21L8 22L2 17Z" fill={G} stroke={D} strokeWidth="1.2" /><path d="M1 2L8 4L12 8L12 12L5 11ZM11 17L16 12L22 12L17 20L12 21Z" fill={B} stroke={BS} strokeWidth="1" /></>,
  <><path d="M16 0L1 20L14 17Z" fill="#5a9bd8" /><path d="M16 0L14 17L22 26Z" fill="#2f78bd" /></>,
  <><path d="M1 18A11 11 0 0 1 23 18H17A5 5 0 0 0 7 18Z" fill="#fff" stroke={D} strokeWidth="1.3" /><path d="M12 7A11 11 0 0 1 23 18H17A5 5 0 0 0 12 13Z" fill={B} stroke={BS} strokeWidth="1" /><path d="M8 9L12 20" stroke={D} strokeWidth="1.3" /></>,
  <><R x={1} y={4} w={22} h={17} /><text x="12" y="17.5" textAnchor="middle" fontSize="12" fill="#4a8ccb">123</text></>,
  <><R x={1} y={1} w={22} h={22} /><path d="M4 5V19" stroke={D} strokeWidth="1" /><path d="M7 6H19M7 12H19M7 17H15" stroke={BS} strokeWidth="2.2" /></>,

  <><R x={1} y={4} w={22} h={17} /><path d="M3 17L7 10L11 17Z" fill="#5b9a68" /><path d="M12 9H21L16.5 17Z" fill="#d94b4b" /></>,
  <><R x={1} y={2} w={22} h={20} /><path d="M1 6H23" stroke={D} strokeWidth="1.2" /><rect x="4" y="9" width="4" height="3" fill="#a19f9d" /><rect x="4" y="15" width="4" height="3" fill="#a19f9d" /><path d="M10 11H24L19 17V24H15V17Z" fill="#fff" stroke={D} strokeWidth="1.3" /></>,
  <><R x={1} y={2} w={22} h={21} /><rect x="1" y="2" width="22" height="4" fill="#8a8886" /><path d="M1 11H23M1 17H23M8 6V23M15.5 6V23" stroke="#8a8886" strokeWidth="1" /></>,
  <><R x={1} y={2} w={22} h={21} /><rect x="1" y="2" width="22" height="4" fill="#605e5c" /><rect x="15" y="6" width="8" height="17" fill={B} /><rect x="1" y="17" width="22" height="6" fill={B} /><path d="M1 11H23M1 17H23M8 6V23M15.5 6V23" stroke="#a19f9d" strokeWidth="1" /></>,
  <text x="12" y="19" textAnchor="middle" fontSize="20" fontWeight="700" fill="#3d82c4" fontFamily="Liberation Sans">R</text>,
  <text x="12" y="17" textAnchor="middle" fontSize="21" fontWeight="700" fill="#3d82c4" fontFamily="Liberation Sans">Py</text>,

  <><Axes /><circle cx="19" cy="5" r="3" fill={B} stroke={BS} /><path d="M2 5H16" stroke={BS} strokeWidth="1.3" /><path d="M2 11H12M2 17H9" stroke="#8a8886" strokeWidth="1.3" /><circle cx="13" cy="11" r="2" fill="#a19f9d" /><circle cx="9" cy="17" r="2" fill="#a19f9d" /></>,
  <><R x={1} y={9} w={8} h={6} f={B} s={BS} /><path d="M9 12H13M13 5V20" stroke={D} strokeWidth="1.3" /><R x={15} y={1} w={8} h={6} f={B} s={BS} /><R x={15} y={9} w={8} h={6} f={B} s={BS} /><R x={15} y={17} w={8} h={6} f={B} s={BS} /></>,
  <path d="M1 2H23V18H8L5 23V18H1Z" fill="#fff" stroke="#3d72b4" strokeWidth="1.5" />,
  <><path d="M4 1H16L22 7V23H4Z" fill="#fff" stroke={D} strokeWidth="1.2" /><circle cx="4" cy="10" r="2" fill="#4a8ccb" /><path d="M9 10H18M7 14H18" stroke="#4a8ccb" strokeWidth="1.2" /></>,
  <><path d="M5 1H19V9C19 14 15 15 12 15C9 15 5 14 5 9Z" fill="#fff" stroke={D} strokeWidth="1.4" /><path d="M5 3H1C1 8 3 11 6 12M19 3H23C23 8 21 11 18 12M12 15V19" fill="none" stroke={D} strokeWidth="1.4" /><rect x="6" y="2" width="12" height="4" fill={BS} /><path d="M7 23L9 19H15L17 23Z" fill="#4a8ccb" /></>,
  <><path d="M3 1H15L21 7V23H3Z" fill="#fff" stroke={D} strokeWidth="1.3" /><path d="M15 1V7H21" fill="none" stroke={D} strokeWidth="1.1" /><rect x="6" y="15" width="3" height="6" fill="#484644" /><rect x="10.5" y="17" width="3" height="4" fill="#484644" /><rect x="15" y="12" width="3" height="9" fill="#484644" /></>,

  <><R x={2} y={6} w={21} h={16} /><text x="13" y="19" textAnchor="middle" fontSize="11" fill="#4a8ccb">123</text><path d="M5 0H11L8 5H11L2 14L4 8H0Z" fill="#f6b352" stroke="#c7782a" strokeWidth=".7" /></>,
  <><R x={2} y={2} w={21} h={20} /><rect x="6" y="10" width="4" height="3" fill="#a19f9d" /><rect x="6" y="16" width="4" height="3" fill="#a19f9d" /><path d="M11 11H24L19 17V24H15V17Z" fill="#fff" stroke={D} strokeWidth="1.3" /><path d="M5 0H11L8 5H11L2 14L4 8H0Z" fill="#f6b352" stroke="#c7782a" strokeWidth=".7" /></>,
  <><R x={1} y={1} w={22} h={22} s={BS} f="#dfeaf5" /><path d="M7 23C8 16 14 18 16 12C17 8 20 7 23 7" fill="none" stroke={BS} strokeWidth="2" /><path d="M4 1C0 1 0 5 1 7L4 12L7 7C8 5 8 1 4 1Z" fill="#c9692b" /><circle cx="20" cy="19" r="4" fill="#c9692b" /><circle cx="20" cy="11" r="2" fill="#c9692b" /></>,
  <><path d="M12 1L23 12L12 23L1 12Z" fill="none" stroke="#8a3a98" strokeWidth="1.5" /><path d="M6.5 6.5L17.5 17.5M17.5 6.5L12 12M12 12L6.5 17.5" fill="none" stroke="#8a3a98" strokeWidth="1.5" /></>,
  <><path d="M1 3H14L23 12L14 22H1L9 12Z" fill="#fff" stroke="#3d82c4" strokeWidth="1.5" /><path d="M5 3L14 12L5 22M14 12H23" fill="none" stroke="#3d82c4" strokeWidth="1.2" /></>,
  <g fill={D}><rect x="4" y="10" width="2" height="2" /><rect x="11" y="10" width="2" height="2" fill="#3d72b4" /><rect x="18" y="10" width="2" height="2" /></g>,
]

function Chevrons() {
  return (
    <svg viewBox="0 0 16 16" className="w-[16px] h-[16px]">
      <path d="M2 1L9 8L2 15M8 1L15 8L8 15" fill="none" stroke="#323130" strokeWidth="1.3" />
    </svg>
  )
}

function Toggle({ on }: { on: boolean }) {
  if (on) {
    return (
      <div className="w-[40px] h-[20px] rounded-full bg-[#3a7766] flex items-center justify-between pl-[6px] pr-[5px] text-white text-[11px]">
        On
        <span className="w-[10px] h-[10px] rounded-full bg-white" />
      </div>
    )
  }
  return (
    <div className="w-[40px] h-[20px] rounded-full border border-[#8a8886] bg-white flex items-center justify-between pl-[4px] pr-[5px] text-[#605e5c] text-[11px]">
      <span className="w-[10px] h-[10px] rounded-full bg-[#605e5c]" />
      Off
    </div>
  )
}

function VizPane() {
  return (
    <div className="w-[227px] shrink-0 bg-[#f3f2f1] border-l border-r border-[#e1dfdd] flex flex-col text-[14.5px] tracking-[-0.1px] text-[#484644]">
      <div className="mt-[13px] h-[24px] pl-[10px] pr-[10px] flex items-center justify-between">
        <span className="text-[20px] font-semibold tracking-[-0.4px] text-[#252423]">Visualizations</span>
        <Chevrons />
      </div>
      <div className="mt-[11px] h-[20px] pl-[10px] leading-[20px] font-medium text-[#323130]">Build visual</div>
      <div className="mt-[4px] h-[40px] pl-[10px] flex">
        <div className="w-[40px] h-[40px] rounded-[2px] bg-[#d9d7d6] flex items-center justify-center">
          <svg viewBox="0 0 32 32" className="w-[32px] h-[32px]">
            <path d="M3 2H18" stroke="#323130" strokeWidth="1" />
            <rect x="2" y="7" width="28" height="9" fill="#3a7766" stroke="#323130" strokeDasharray="2 1" />
            <rect x="2" y="20" width="28" height="9" fill="#3a7766" stroke="#323130" strokeDasharray="2 1" />
          </svg>
        </div>
        <svg viewBox="0 0 32 32" className="ml-[46px] mt-[4px] w-[32px] h-[32px]">
          <path d="M6 29H2V2H13L19 8V14M13 2V8H19" fill="none" stroke="#323130" strokeWidth="1.2" />
          <path d="M12 27C16 27 17 24 17 22L29 11L31 13L22 25C20 28 15 30 10 29" fill="#fff" stroke="#323130" strokeWidth="1.2" />
        </svg>
      </div>
      <div className="relative mt-[15px] h-px bg-[#a19f9d]">
        <svg viewBox="0 0 22 10" className="absolute left-[20px] -top-[9px] w-[22px] h-[10px]">
          <path d="M0 10L11 0L22 10" fill="#f3f2f1" stroke="#a19f9d" strokeWidth="1" />
        </svg>
      </div>
      <div className="mt-[7px] pl-[7px] grid grid-cols-6 w-[217px]">
        {vizIcons.map((icon, i) => (
          <div key={i} className="w-[35px] h-[35px] flex items-center justify-center">
            <svg viewBox="0 0 24 24" className="w-[24px] h-[24px] overflow-visible">
              {icon}
            </svg>
          </div>
        ))}
      </div>
      <div className="mt-[6px] h-px bg-[#e1dfdd]" />
      <div className="mt-[12px] pl-[15px] h-[18px] leading-[18px]">Values</div>
      <div className="mt-[7px] ml-[5px] mr-[7px] h-[35px] bg-white border border-dashed border-[#c8c6c4] flex items-center pl-[13px]">Add data fields here</div>
      <div className="mt-[14px] pl-[15px] h-[20px] leading-[20px] font-semibold">Drill through</div>
      <div className="mt-[11px] pl-[15px] pr-[27px] h-[20px] flex items-center justify-between">
        Cross-report
        <Toggle on={false} />
      </div>
      <div className="mt-[14px] pl-[15px] pr-[27px] h-[20px] flex items-center justify-between">
        Keep all filters
        <Toggle on={true} />
      </div>
      <div className="mt-[13px] ml-[5px] mr-[7px] h-[32px] bg-white border border-dashed border-[#c8c6c4] flex items-center pl-[10px] whitespace-nowrap">Add drill-through fields here</div>
    </div>
  )
}

// ─── Data pane ─────────────────────────────────────────────────────────────

function CalcTableIcon() {
  return (
    <svg viewBox="0 0 18 18" className="w-[18px] h-[18px] shrink-0">
      <path d="M1 1H14M1 1V15H7M1 5H14M1 10H7M5 1V15M10 1V5" fill="none" stroke="#605e5c" strokeWidth="1.1" />
      <rect x="9" y="7" width="8" height="10" fill="#f3f2f1" stroke="#484644" strokeWidth="1" />
      <path d="M10 10H16M10 12.5H16M10 15H16" stroke="#484644" strokeWidth="1.2" strokeDasharray="1.5 .7" />
    </svg>
  )
}

function TableIcon() {
  return (
    <svg viewBox="0 0 16 16" className="w-[16px] h-[16px] shrink-0 mr-[2px]">
      <rect x=".7" y=".7" width="14.6" height="14.6" rx="2" fill="none" stroke="#605e5c" strokeWidth="1.2" />
      <path d="M.7 5.5H15.3M.7 10.5H15.3M5.5 .7V15.3M10.5 .7V15.3" stroke="#605e5c" strokeWidth="1.2" />
    </svg>
  )
}

function DataPane() {
  const rows = [
    { name: "_Measures", calc: true },
    { name: "Coupler dataset", calc: false },
    { name: "Selection filter(CPC/CPM)", calc: true },
    { name: "Selection filter(Impressi...", calc: true },
  ]
  return (
    <div className="w-[225px] shrink-0 bg-[#f3f2f1] flex flex-col relative">
      <div className="mt-[13px] h-[24px] pl-[11px] pr-[11px] flex items-center justify-between">
        <span className="text-[20px] font-semibold tracking-[-0.2px] text-[#252423]">Data</span>
        <Chevrons />
      </div>
      <span className="absolute right-0 top-[16px] w-px h-[16px] bg-[#252423]" />
      <div className="mt-[20px] ml-[5px] mr-[5px] h-[33px] rounded-[2px] border border-[#8a8886] flex items-center pl-[9px] text-[16px] text-[#605e5c] tracking-[-0.1px]">
        <svg viewBox="0 0 20 20" className="w-[20px] h-[20px] mr-[6px]">
          <circle cx="12" cy="8" r="6" fill="none" stroke="#605e5c" strokeWidth="1.2" />
          <path d="M7.5 12.5L1 19" stroke="#605e5c" strokeWidth="1.2" />
        </svg>
        Search
      </div>
      <div className="mt-[12px] flex flex-col text-[14.5px] tracking-[-0.1px] text-[#605e5c]">
        {rows.map((r) => (
          <div key={r.name} className="h-[30px] flex items-center pl-[12px] whitespace-nowrap">
            <svg viewBox="0 0 8 14" className="w-[8px] h-[14px] mr-[8px]">
              <path d="M1 1L7 7L1 13" fill="none" stroke="#605e5c" strokeWidth="1.1" />
            </svg>
            {r.calc ? <CalcTableIcon /> : <TableIcon />}
            <span className="ml-[5px]">{r.name}</span>
          </div>
        ))}
      </div>
    </div>
  )
}

// ─── Status bar ────────────────────────────────────────────────────────────

function StatusBar() {
  return (
    <div className="h-[29px] shrink-0 bg-[#f3f2f1] border-t border-[#e1dfdd] flex items-center pl-[5px] pr-[21px] text-[15px] tracking-[-0.3px] text-[#605e5c]">
      Page 1 of 2
      <div className="ml-auto flex items-center">
        <span className="w-[5px] h-[2px] bg-[#484644]" />
        <div className="relative ml-[4px] w-[125px] h-px bg-[#484644]">
          <span className="absolute left-[60px] -top-[6px] w-[4px] h-[13px] bg-[#484644]" />
        </div>
        <svg viewBox="0 0 11 11" className="ml-[6px] w-[11px] h-[11px]">
          <path d="M5.5 0V11M0 5.5H11" stroke="#484644" strokeWidth="1.3" />
        </svg>
        <span className="ml-[16px] text-[#484644]">100%</span>
        <svg viewBox="0 0 20 18" className="ml-[16px] w-[20px] h-[18px]">
          <rect x=".7" y=".7" width="18.6" height="16.6" fill="none" stroke="#605e5c" strokeWidth="1.4" />
          <path d="M7 4H4V14H7M13 4H16V14H13" fill="none" stroke="#484644" strokeWidth="1" />
        </svg>
      </div>
    </div>
  )
}

export default function App() {
  return (
    <div className="w-[1920px] h-[1020px] overflow-hidden flex flex-col bg-white font-['Open_Sans',sans-serif]">
      <TitleBar />
      <Ribbon />
      <div className="flex-1 min-h-0 flex">
        <LeftNav />
        <Canvas />
        <VizPane />
        <DataPane />
      </div>
      <StatusBar />
      <div className="h-px shrink-0 bg-black" />
    </div>
  )
}
